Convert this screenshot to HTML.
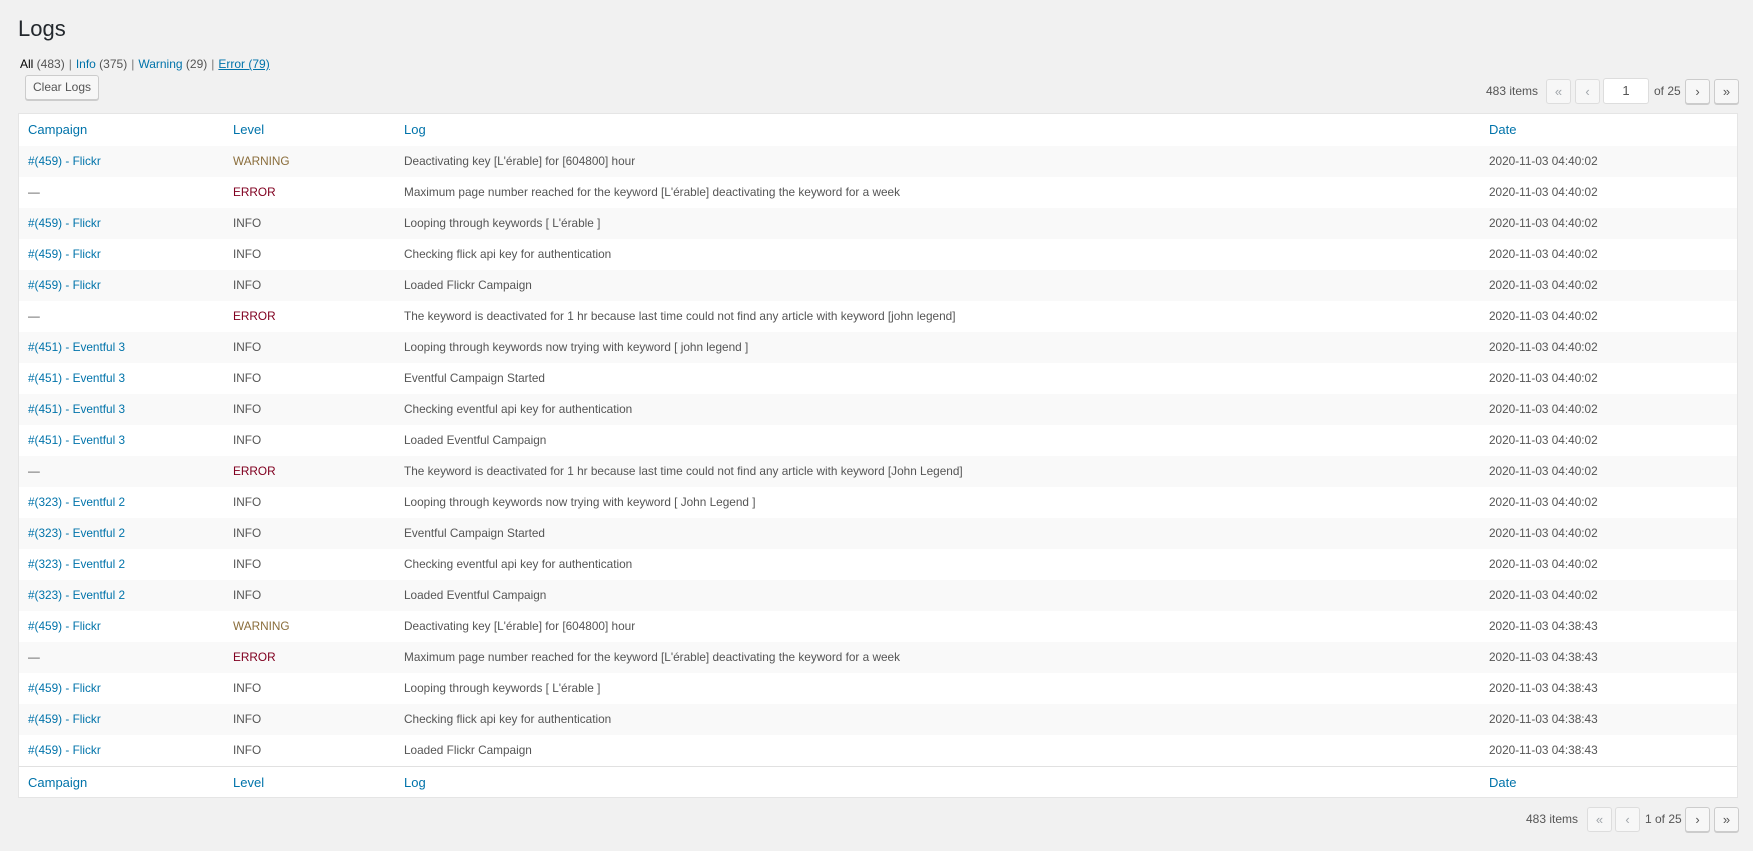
<!DOCTYPE html>
<html><head><meta charset="utf-8"><style>
body{margin:0;background:#f1f1f1;font-family:"Liberation Sans",sans-serif;font-size:13px;color:#555;width:1753px;height:851px;overflow:hidden;position:relative}
a{color:#0073aa;text-decoration:none}
h1{position:absolute;left:18px;top:16px;margin:0;font-size:22px;font-weight:400;color:#23282d}
.filters{position:absolute;left:20px;top:57px;font-size:12px;color:#555}
.filters b{color:#000;font-weight:400}
.filters .sep{color:#777;margin:0 4px}
.btn{position:absolute;border:1px solid #ccc;background:#f7f7f7;border-radius:3px;box-sizing:border-box;color:#555;text-align:center;box-shadow:0 1px 0 #ccc}
.dis{border-color:#ddd;background:#f7f7f7;color:#a0a5aa;box-shadow:none}
.tbl{position:absolute;left:18px;top:113px;width:1720px;height:685px;background:#fff;border:1px solid #e5e5e5;box-sizing:border-box}
.row{position:absolute;left:0;width:1718px;height:31px;line-height:31px;font-size:11.8px}
.row.odd{background:#f9f9f9}
.row span{position:absolute;white-space:nowrap}
.c1{left:9px}.c2{left:214px}.c3{left:385px}.c4{left:1470px}
.hd{height:32px;line-height:32px;font-size:13px;border-bottom:1px solid #e1e1e1}
.hd span{color:#0073aa}
.w{color:#8a6d3b}.e{color:#800020}
.pg{position:absolute;font-size:12px;line-height:24px}
</style></head><body>
<h1>Logs</h1>
<div class="filters"><b>All</b> (483)<span class="sep">|</span><a>Info</a> (375)<span class="sep">|</span><a>Warning</a> (29)<span class="sep">|</span><a style="text-decoration:underline">Error (79)</a></div>
<div class="btn" style="left:25px;top:75px;width:74px;height:25px;line-height:23px;font-size:12px">Clear Logs</div>

<div class="pg" style="left:1486px;top:79px">483 items</div>
<div class="btn dis" style="left:1546px;top:79px;width:25px;height:25px;line-height:23px">«</div>
<div class="btn dis" style="left:1575px;top:79px;width:25px;height:25px;line-height:23px">‹</div>
<div class="btn" style="left:1603px;top:78px;width:46px;height:26px;line-height:24px;background:#fff;box-shadow:none;border-color:#ddd">1</div>
<div class="pg" style="left:1654px;top:79px">of 25</div>
<div class="btn" style="left:1685px;top:79px;width:25px;height:25px;line-height:23px">›</div>
<div class="btn" style="left:1714px;top:79px;width:25px;height:25px;line-height:23px">»</div>

<div class="tbl">
<div class="row hd" style="top:0"><span class="c1">Campaign</span><span class="c2">Level</span><span class="c3">Log</span><span class="c4">Date</span></div>
<div class="row odd" style="top:32px"><span class="c1"><a>#(459) - Flickr</a></span><span class="c2 w">WARNING</span><span class="c3">Deactivating key [L'érable] for [604800] hour</span><span class="c4">2020-11-03 04:40:02</span></div>
<div class="row" style="top:63px"><span class="c1">—</span><span class="c2 e">ERROR</span><span class="c3">Maximum page number reached for the keyword [L'érable] deactivating the keyword for a week</span><span class="c4">2020-11-03 04:40:02</span></div>
<div class="row odd" style="top:94px"><span class="c1"><a>#(459) - Flickr</a></span><span class="c2">INFO</span><span class="c3">Looping through keywords [ L'érable ]</span><span class="c4">2020-11-03 04:40:02</span></div>
<div class="row" style="top:125px"><span class="c1"><a>#(459) - Flickr</a></span><span class="c2">INFO</span><span class="c3">Checking flick api key for authentication</span><span class="c4">2020-11-03 04:40:02</span></div>
<div class="row odd" style="top:156px"><span class="c1"><a>#(459) - Flickr</a></span><span class="c2">INFO</span><span class="c3">Loaded Flickr Campaign</span><span class="c4">2020-11-03 04:40:02</span></div>
<div class="row" style="top:187px"><span class="c1">—</span><span class="c2 e">ERROR</span><span class="c3">The keyword is deactivated for 1 hr because last time could not find any article with keyword [john legend]</span><span class="c4">2020-11-03 04:40:02</span></div>
<div class="row odd" style="top:218px"><span class="c1"><a>#(451) - Eventful 3</a></span><span class="c2">INFO</span><span class="c3">Looping through keywords now trying with keyword [ john legend ]</span><span class="c4">2020-11-03 04:40:02</span></div>
<div class="row" style="top:249px"><span class="c1"><a>#(451) - Eventful 3</a></span><span class="c2">INFO</span><span class="c3">Eventful Campaign Started</span><span class="c4">2020-11-03 04:40:02</span></div>
<div class="row odd" style="top:280px"><span class="c1"><a>#(451) - Eventful 3</a></span><span class="c2">INFO</span><span class="c3">Checking eventful api key for authentication</span><span class="c4">2020-11-03 04:40:02</span></div>
<div class="row" style="top:311px"><span class="c1"><a>#(451) - Eventful 3</a></span><span class="c2">INFO</span><span class="c3">Loaded Eventful Campaign</span><span class="c4">2020-11-03 04:40:02</span></div>
<div class="row odd" style="top:342px"><span class="c1">—</span><span class="c2 e">ERROR</span><span class="c3">The keyword is deactivated for 1 hr because last time could not find any article with keyword [John Legend]</span><span class="c4">2020-11-03 04:40:02</span></div>
<div class="row" style="top:373px"><span class="c1"><a>#(323) - Eventful 2</a></span><span class="c2">INFO</span><span class="c3">Looping through keywords now trying with keyword [ John Legend ]</span><span class="c4">2020-11-03 04:40:02</span></div>
<div class="row odd" style="top:404px"><span class="c1"><a>#(323) - Eventful 2</a></span><span class="c2">INFO</span><span class="c3">Eventful Campaign Started</span><span class="c4">2020-11-03 04:40:02</span></div>
<div class="row" style="top:435px"><span class="c1"><a>#(323) - Eventful 2</a></span><span class="c2">INFO</span><span class="c3">Checking eventful api key for authentication</span><span class="c4">2020-11-03 04:40:02</span></div>
<div class="row odd" style="top:466px"><span class="c1"><a>#(323) - Eventful 2</a></span><span class="c2">INFO</span><span class="c3">Loaded Eventful Campaign</span><span class="c4">2020-11-03 04:40:02</span></div>
<div class="row" style="top:497px"><span class="c1"><a>#(459) - Flickr</a></span><span class="c2 w">WARNING</span><span class="c3">Deactivating key [L'érable] for [604800] hour</span><span class="c4">2020-11-03 04:38:43</span></div>
<div class="row odd" style="top:528px"><span class="c1">—</span><span class="c2 e">ERROR</span><span class="c3">Maximum page number reached for the keyword [L'érable] deactivating the keyword for a week</span><span class="c4">2020-11-03 04:38:43</span></div>
<div class="row" style="top:559px"><span class="c1"><a>#(459) - Flickr</a></span><span class="c2">INFO</span><span class="c3">Looping through keywords [ L'érable ]</span><span class="c4">2020-11-03 04:38:43</span></div>
<div class="row odd" style="top:590px"><span class="c1"><a>#(459) - Flickr</a></span><span class="c2">INFO</span><span class="c3">Checking flick api key for authentication</span><span class="c4">2020-11-03 04:38:43</span></div>
<div class="row" style="top:621px"><span class="c1"><a>#(459) - Flickr</a></span><span class="c2">INFO</span><span class="c3">Loaded Flickr Campaign</span><span class="c4">2020-11-03 04:38:43</span></div>
<div class="row hd" style="top:652px;border-bottom:none;border-top:1px solid #e1e1e1"><span class="c1">Campaign</span><span class="c2">Level</span><span class="c3">Log</span><span class="c4">Date</span></div>
</div>

<div class="pg" style="left:1526px;top:807px">483 items</div>
<div class="btn dis" style="left:1587px;top:807px;width:25px;height:25px;line-height:23px">«</div>
<div class="btn dis" style="left:1615px;top:807px;width:25px;height:25px;line-height:23px">‹</div>
<div class="pg" style="left:1645px;top:807px">1 of 25</div>
<div class="btn" style="left:1685px;top:807px;width:25px;height:25px;line-height:23px">›</div>
<div class="btn" style="left:1714px;top:807px;width:25px;height:25px;line-height:23px">»</div>
</body></html>
